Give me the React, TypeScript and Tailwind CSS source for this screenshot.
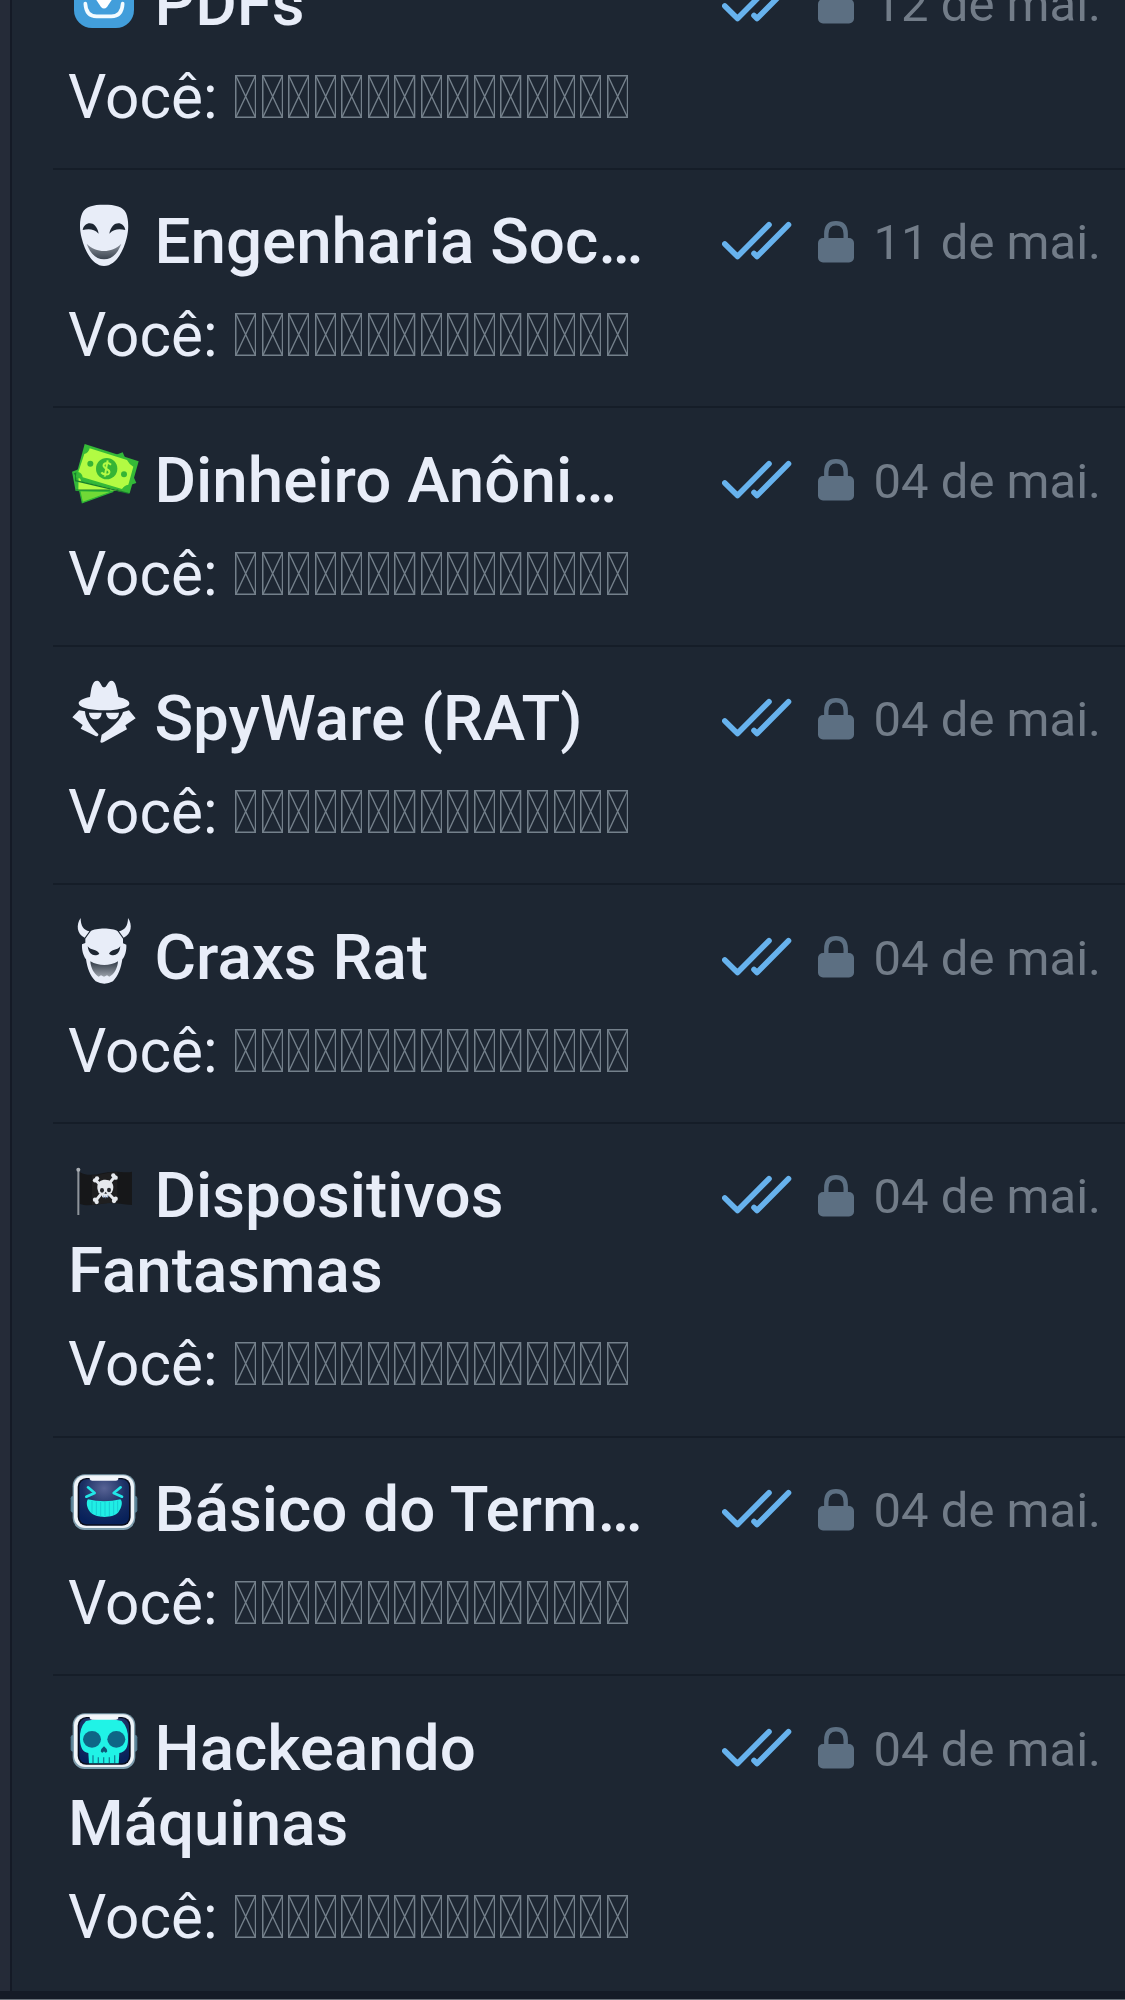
import type { ReactNode } from "react";

const INK = "#e8edf8";
const BG = "#1d2632";

function Icon({ box, children }: { box: string; children: ReactNode }) {
  return (
    <svg viewBox={box} className="mr-[18.5px] ml-[2px] inline-block size-[66px] overflow-visible align-top">
      {children}
    </svg>
  );
}

function DownloadIcon() {
  return (
    <Icon box="210 -105 198 198">
      <rect x="222" y="-97" width="180" height="178" rx="54" fill="#429edb" />
      <path d="M312 -60V-10" stroke="#fff" strokeWidth="18" strokeLinecap="round" />
      <path d="M285 -9H339L321 18Q312 27 303 18Z" fill="#fff" />
      <path d="M256 8Q258 46 290 46H334Q366 46 368 8" fill="none" stroke="#f3fbff" strokeWidth="11" strokeLinecap="round" />
    </Icon>
  );
}

function SmileMaskIcon() {
  return (
    <Icon box="60 42 198 198">
      <defs>
        <linearGradient id="smile" x1="0" y1="0" x2="0" y2="1">
          <stop offset="0" stopColor="#8b929c" />
          <stop offset="1" stopColor="#3b4450" />
        </linearGradient>
      </defs>
      <path d="M162 44C196 44 219 49 228 69C236 88 237 119 230 144C219 190 194 228 162 228C131 228 106 190 95 144C88 119 88 88 97 69C106 49 129 44 162 44Z" fill={INK} />
      <path d="M98 120C103 93 139 90 146 131C132 117 118 116 98 120Z" fill={BG} />
      <path d="M226 120C221 93 186 90 178 131C192 117 206 116 226 120Z" fill={BG} />
      <path d="M110 161C139 190 185 190 214 161C203 190 187 208 162 208C137 208 121 190 110 161Z" fill="url(#smile)" />
    </Icon>
  );
}

function CashIcon() {
  return (
    <Icon box="60 37 198 198">
      <path d="M89 179L190 182L97 216Z" fill="#70d936" stroke="#2bb336" strokeWidth="4" />
      <path d="M66 123L218 65L259 157L176 184L77 181Z" fill="#32b83a" />
      <path d="M86 131L94 153L230 184L175 178L85 178Z" fill="#b4fa45" />
      <path d="M72 130L77 128V150L238 188" stroke="#17802c" strokeWidth="4" fill="none" />
      <path d="M78 178H180" stroke="#17802c" strokeWidth="3" />
      <path d="M104 40L266 92L239 188L77 140Z" fill="#35ba37" />
      <path d="M119 53L231 88Q236 99 250 108L235 162Q222 164 216 175L98 140Q97 128 85 124L103 70Q116 67 119 53Z" fill="#b2fb43" />
      <circle cx="170" cy="114" r="32" fill="#35b535" />
      <circle cx="121" cy="99" r="9" fill="#35b535" />
      <circle cx="222" cy="131" r="9" fill="#35b535" />
      <path d="M183 102C173 93 158 98 161 107C164 117 181 115 178 126C175 136 158 131 154 125M173 89L164 138" fill="none" stroke="#b4fa45" strokeWidth="6" />
    </Icon>
  );
}

function SpyIcon() {
  return (
    <Icon box="60 48 198 198">
      <g fill={INK}>
        <path d="M120 96C124 70 126 47 142 47C151 47 154 67 162 67C171 67 174 47 184 47C198 47 200 72 205 96C228 101 239 108 238 116C237 129 199 136 162 136C125 136 87 129 86 115C86 107 98 100 120 96Z" />
        <path d="M117 143H155C154 158 146 164 136 163C126 163 118 157 117 143Z" />
        <path d="M168 143H207C206 158 198 164 188 163C177 163 169 156 168 143Z" />
        <path d="M87 136L105 139C106 162 123 188 145 207Q146 214 138 214L92 191L98 180L67 157Z" />
        <path d="M237 136L219 141C213 162 189 188 155 209L151 231Q154 236 163 230L231 193L226 181L257 160Z" />
      </g>
    </Icon>
  );
}

function DevilIcon() {
  return (
    <Icon box="60 43 198 198">
      <defs>
        <linearGradient id="grin" x1="0" y1="0" x2="0" y2="1">
          <stop offset="0" stopColor="#303946" />
          <stop offset="1" stopColor="#9aa1aa" />
        </linearGradient>
      </defs>
      <path d="M92 37C78 57 80 85 104 96L118 77C101 73 92 61 92 37Z" fill={INK} />
      <path d="M234 37C248 57 245 85 221 96L207 77C224 73 234 61 234 37Z" fill={INK} />
      <path d="M122 77C137 66 188 66 203 77L219 99V113L229 117C230 135 225 152 217 161C213 188 205 210 189 227Q163 241 137 227C120 210 112 188 108 161C100 151 95 134 96 116L106 112V99Z" fill={INK} />
      <path d="M113 122C124 136 139 129 148 144C137 153 117 151 113 122Z" fill={BG} />
      <path d="M211 122C200 136 186 129 177 144C188 153 208 151 211 122Z" fill={BG} />
      <path d="M121 167C147 182 179 182 204 167C203 186 193 207 178 213L171 209L162 213L153 209L146 213C132 205 122 187 121 167Z" fill="url(#grin)" />
    </Icon>
  );
}

function PirateFlagIcon() {
  return (
    <Icon box="60 24 198 198">
      <path d="M85 62V195" stroke="#8e949b" strokeWidth="6" />
      <circle cx="85" cy="59" r="6" fill="#aaafb5" />
      <path d="M90 67C124 86 161 63 194 65C214 65 230 69 246 65V165C215 164 194 157 164 160C137 164 111 170 90 162Z" fill="#161719" />
      <path d="M126 76V165C147 164 176 157 202 158V65C175 66 151 76 126 76Z" fill="#1f1f20" />
      <path d="M139 92L195 151M194 80L138 151" stroke="#e6e9ed" strokeWidth="9" strokeLinecap="round" />
      <g fill="#e6e9ed">
        <circle cx="135" cy="91" r="6.5" /><circle cx="141" cy="85" r="6.5" />
        <circle cx="190" cy="76" r="6.5" /><circle cx="197" cy="83" r="6.5" />
        <circle cx="135" cy="149" r="6.5" /><circle cx="140" cy="156" r="6.5" />
        <circle cx="192" cy="153" r="6.5" /><circle cx="197" cy="146" r="6.5" />
        <path d="M142 110C143 96 152 89 166 89C181 89 190 99 190 111C190 121 186 125 185 129L177 132L174 142H157L154 132L146 129C145 122 141 118 142 110Z" />
      </g>
      <ellipse cx="156" cy="121" rx="6" ry="7" fill="#25272b" />
      <ellipse cx="177" cy="120" rx="6" ry="7" fill="#25272b" />
      <path d="M167 125L163 131H171Z" fill="#25272b" />
      <path d="M161 136V144M167 137V145M173 135V143" stroke="#7296c4" strokeWidth="2" />
    </Icon>
  );
}

function RobotFrame({ y, id, children }: { y: number; id: string; children: ReactNode }) {
  return (
    <g transform={`translate(0 ${y})`}>
      <defs>
        <radialGradient id={id} cx="0.5" cy="0.2" r="0.8">
          <stop offset="0" stopColor="#586395" />
          <stop offset="0.55" stopColor="#1a2f63" />
          <stop offset="1" stopColor="#08215a" />
        </radialGradient>
      </defs>
      <rect x="62" y="65" width="200" height="50" rx="7" fill="#537b91" />
      <rect x="68" y="0" width="188" height="167" rx="36" fill="#7f9eae" />
      <rect x="72" y="3" width="180" height="158" rx="33" fill="#eef3f8" />
      <rect x="83" y="11" width="159" height="143" rx="26" fill="#090d1d" />
      <rect x="88" y="15" width="149" height="135" rx="22" fill={`url(#${id})`} />
      {children}
      <path d="M119 7H205V14Q204 19 198 19H127Q120 19 119 14Z" fill="#f4f6fa" />
    </g>
  );
}

function LaughingRobotIcon() {
  return (
    <Icon box="60 36 198 198">
      <RobotFrame y={43} id="laughScreen">
        <path d="M114 39L134 56L109 67M212 39L191 56L216 67" fill="none" stroke="#22e7e7" strokeWidth="8" strokeLinecap="round" strokeLinejoin="round" />
        <path d="M114 75C145 83 180 83 211 75C219 82 216 99 205 114C192 132 137 133 121 114C108 98 109 80 114 75Z" fill="#20eee5" />
        <path d="M126 80V116M139 82V122M152 83V126M165 83V126M178 82V125M191 81V121M203 79V112" stroke="#18cbd2" strokeWidth="3" />
      </RobotFrame>
    </Icon>
  );
}

function SkullRobotIcon() {
  return (
    <Icon box="60 33 198 198">
      <RobotFrame y={40} id="skullScreen">
        <path d="M108 23Q163 8 215 23Q235 43 234 77C234 104 227 115 208 119L206 150H117L115 119C99 117 91 105 90 78Q88 43 108 23Z" fill="#20f3e6" />
        <ellipse cx="126" cy="78" rx="27" ry="25" fill="#0e6686" />
        <ellipse cx="199" cy="78" rx="27" ry="25" fill="#0e6686" />
        <path d="M162 99Q153 106 152 114Q157 122 162 114Q167 122 172 114Q171 106 162 99Z" fill="#0e5576" />
        <path d="M129 126V149M145 132V149M161 132V149M178 132V149M194 126V149" stroke="#10879b" strokeWidth="4" />
      </RobotFrame>
    </Icon>
  );
}

function DoubleCheck() {
  return (
    <svg viewBox="0 0 70 40" className="mt-[17px] h-[40px] w-[70px] shrink-0" fill="none" stroke="#67b2ed" strokeWidth="5.6" strokeLinecap="round" strokeLinejoin="round">
      <path d="M2.8 23L15.5 35.5L47 3.8" />
      <path d="M32 32.5L35 35.5L66.5 3.8" />
    </svg>
  );
}

function Lock() {
  return (
    <svg viewBox="0 0 36 42" className="mt-[16.5px] ml-[26px] h-[42px] w-9 shrink-0">
      <path d="M8.3 19V13Q8.3 2.3 18 2.3Q27.7 2.3 27.7 13V19" fill="none" stroke="#5c6f82" strokeWidth="4.4" />
      <rect y="17" width="36" height="24.5" rx="5" fill="#5c6f82" />
    </svg>
  );
}

function MissingGlyph() {
  return (
    <svg viewBox="0 0 21.3 43" className="h-[43px] w-[21.3px] shrink-0" fill="none" stroke="#74808b">
      <rect x="0.75" y="0.75" width="19.8" height="41.5" strokeWidth="1.5" />
      <path d="M1 1L20.3 42M20.3 1L1 42" strokeWidth="1.4" />
    </svg>
  );
}

type Topic = { title: string; date: string; icon: ReactNode; tall?: boolean };

const topics: Topic[] = [
  { title: "PDFs", date: "12 de mai.", icon: <DownloadIcon /> },
  { title: "Engenharia Soc…", date: "11 de mai.", icon: <SmileMaskIcon /> },
  { title: "Dinheiro Anôni…", date: "04 de mai.", icon: <CashIcon /> },
  { title: "SpyWare (RAT)", date: "04 de mai.", icon: <SpyIcon /> },
  { title: "Craxs Rat", date: "04 de mai.", icon: <DevilIcon /> },
  { title: "Dispositivos Fantasmas", date: "04 de mai.", icon: <PirateFlagIcon />, tall: true },
  { title: "Básico do Term…", date: "04 de mai.", icon: <LaughingRobotIcon /> },
  { title: "Hackeando Máquinas", date: "04 de mai.", icon: <SkullRobotIcon />, tall: true },
];

function TopicRow({ topic, last }: { topic: Topic; last: boolean }) {
  return (
    <div className={`${topic.tall ? "h-[314px]" : "h-[238.5px]"} ${last ? "" : "border-b-[2px] border-[#151d28]"} shrink-0 pt-[34.5px] pr-[24px] pl-[15px]`}>
      <div className="flex items-start">
        <h2 className="w-[600px] text-[63.7px] leading-[75px] font-medium text-[#e8edf8]">
          {topic.icon}
          {topic.title}
        </h2>
        <div className="ml-auto flex items-start">
          <DoubleCheck />
          <Lock />
          <span className="mt-[10px] ml-[20px] text-[49px] leading-[58px] whitespace-nowrap text-[#727c88]">{topic.date}</span>
        </div>
      </div>
      <div className="mt-[22px] flex items-start">
        <span className="w-[167px] text-[60.3px] leading-[69px] whitespace-nowrap text-[#e8edf8]">Você:</span>
        <span className="mt-[12px] flex gap-[5.25px]">
          {Array.from({ length: 15 }, (_, i) => (
            <MissingGlyph key={i} />
          ))}
        </span>
      </div>
    </div>
  );
}

export default function App() {
  return (
    <main className="flex h-[2000px] w-[1125px] flex-col overflow-hidden bg-[#1d2632] font-[Roboto,sans-serif]">
      <div className="flex h-[1991px] overflow-hidden">
        <div className="w-3 shrink-0 border-r-2 border-[#141a26] bg-[#252b38]" />
        <div className="-mt-[69px] ml-[41px] flex flex-1 flex-col">
          {topics.map((topic, i) => (
            <TopicRow key={topic.title} topic={topic} last={i === topics.length - 1} />
          ))}
        </div>
      </div>
      <div className="h-[9px] border-b border-[#69717a] bg-[#151b27]" />
    </main>
  );
}
